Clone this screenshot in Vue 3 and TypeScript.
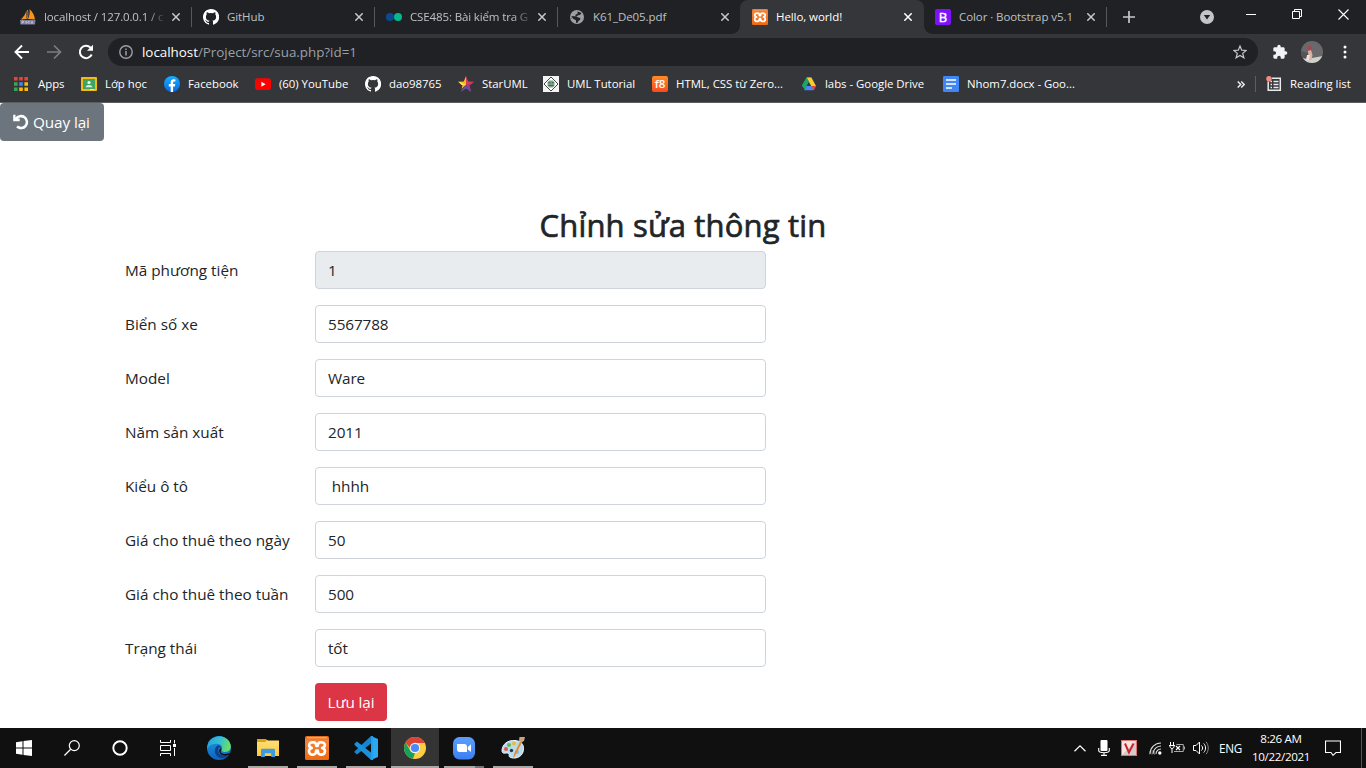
<script setup lang="ts">
import { ref } from 'vue'

interface Tab { title: string; icon: string; active?: boolean; cls?: string }
interface Bookmark { title: string; icon: string }
interface Field { label: string; value: string; readonly?: boolean }

const tabs: Tab[] = [
  { title: 'localhost / 127.0.0.1 / c', icon: 'pma', cls: 'faded' },
  { title: 'GitHub', icon: 'github' },
  { title: 'CSE485: Bài kiểm tra G', icon: 'dots', cls: 'faded' },
  { title: 'K61_De05.pdf', icon: 'globe', cls: 'last-before' },
  { title: 'Hello, world!', icon: 'xampp', active: true },
  { title: 'Color · Bootstrap v5.1', icon: 'bootstrap' },
]

const bookmarks: Bookmark[] = [
  { title: 'Apps', icon: 'apps' },
  { title: 'Lớp học', icon: 'classroom' },
  { title: 'Facebook', icon: 'facebook' },
  { title: '(60) YouTube', icon: 'youtube' },
  { title: 'dao98765', icon: 'github' },
  { title: 'StarUML', icon: 'star' },
  { title: 'UML Tutorial', icon: 'uml' },
  { title: 'HTML, CSS từ Zero...', icon: 'f8' },
  { title: 'labs - Google Drive', icon: 'drive' },
  { title: 'Nhom7.docx - Goo...', icon: 'docs' },
]

const letterIcons: Record<string, string> = { bootstrap: 'B', f8: 'f8' }

const fields = ref<Field[]>([
  { label: 'Mã phương tiện', value: '1', readonly: true },
  { label: 'Biển số xe', value: '5567788' },
  { label: 'Model', value: 'Ware' },
  { label: 'Năm sản xuất', value: '2011' },
  { label: 'Kiểu ô tô', value: ' hhhh' },
  { label: 'Giá cho thuê theo ngày', value: '50' },
  { label: 'Giá cho thuê theo tuần', value: '500' },
  { label: 'Trạng thái', value: 'tốt' },
])

const apps = [
  { icon: 'edge', state: '' },
  { icon: 'explorer', state: 'open' },
  { icon: 'xampp', state: 'open' },
  { icon: 'vscode', state: 'open' },
  { icon: 'chrome', state: 'open current' },
  { icon: 'zoom', state: 'open multi' },
  { icon: 'paint', state: 'open' },
]
</script>

<template>
  <div class="screen">
    <svg class="defs" aria-hidden="true">
      <defs>
        <linearGradient id="gFb" x1="0" y1="0" x2="0" y2="1"><stop offset="0" stop-color="#19afff" /><stop offset="1" stop-color="#0668e8" /></linearGradient>
        <linearGradient id="gXampp" x1="0" y1="0" x2="0" y2="1"><stop offset="0" stop-color="#e06a1c" /><stop offset=".2" stop-color="#f58338" /><stop offset="1" stop-color="#ee6a10" /></linearGradient>
        <linearGradient id="gEdge" x1="0" y1=".2" x2="1" y2=".4"><stop offset="0" stop-color="#2a9fe0" /><stop offset=".55" stop-color="#35c1cf" /><stop offset="1" stop-color="#6be05c" /></linearGradient>
        <linearGradient id="gEdge2" x1="0" y1="0" x2="0" y2="1"><stop offset="0" stop-color="#1b9de2" /><stop offset="1" stop-color="#0c62bf" /></linearGradient>
        <linearGradient id="gFolder" x1="0" y1="0" x2="0" y2="1"><stop offset="0" stop-color="#ffe07a" /><stop offset="1" stop-color="#ffc938" /></linearGradient>
        <linearGradient id="gZoom" x1="0" y1="0" x2="0" y2="1"><stop offset="0" stop-color="#5ba0ff" /><stop offset="1" stop-color="#3b7ff2" /></linearGradient>
        <clipPath id="cAvatar"><circle cx="11" cy="11" r="11" /></clipPath>
        <clipPath id="cStar"><path d="M8 0l2.200 5.400 5.800.4-4.400 3.800L13.200 16 8 12.600 2.800 16l1.600-6.400L0 5.800l5.800-.4z" /></clipPath>
      </defs>
      <symbol id="i-pma" viewBox="0 0 16 16">
        <path d="M6.500 1.500v8.500L.8 10.500C3.500 8 5.500 5 6.500 1.500z" fill="#f6941e" />
        <path d="M9.500 0c3.500 3 5 7 5.500 10.500L8 10C9.500 7 10 3 9.500 0z" fill="#f6941e" />
        <path d="M7.300 1c1 3 .8 6-.4 9" stroke="#9d8e83" fill="none" />
        <path d="M0 11h15.500l-.5 4.500H.5z" fill="#7c7e9c" />
        <path d="M2 15v-3h1.500v1.500H2M6 15v-3l1.500 2L9 12v3M11 15l1-3 1 3" fill="none" stroke="#c9c9df" stroke-width=".7" />
      </symbol>
      <symbol id="i-github" viewBox="0 0 16 16">
        <path fill="#fff" d="M8 0C3.580 0 0 3.580 0 8c0 3.540 2.290 6.530 5.470 7.590.4.070.55-.17.55-.38v-1.330c-2.230.48-2.700-1.070-2.700-1.070-.36-.92-.89-1.170-.89-1.170-.73-.5.050-.49.050-.49.810.060 1.230.83 1.230.83.72 1.230 1.880.87 2.340.67.070-.52.280-.87.510-1.070-1.780-.2-3.650-.89-3.650-3.950 0-.87.310-1.590.83-2.150-.080-.2-.36-1.010.080-2.120 0 0 .67-.21 2.200.82a7.600 7.600 0 0 1 4 0c1.530-1.040 2.200-.82 2.200-.82.440 1.110.160 1.920.080 2.120.51.56.82 1.270.82 2.150 0 3.070-1.870 3.750-3.650 3.950.29.250.54.730.54 1.480v2.200c0 .21.150.46.55.38A8 8 0 0 0 8 0z" />
      </symbol>
      <symbol id="i-dots" viewBox="0 0 16 16"><circle cx="4" cy="8" r="4" fill="#0b4a8f" /><circle cx="12" cy="8" r="4" fill="#05b88f" /></symbol>
      <symbol id="i-globe" viewBox="0 0 16 16">
        <circle cx="8" cy="8" r="7" fill="#9aa0a6" />
        <path d="M8.500 2.500L12.700 4c-1 .3-1 1.800-2.200 2L9 6.200c-.5 1-1.500.5-1.800 1.300L9.500 8.500c.5.500 1.500 0 2 .8L10.800 11 9 12.500 8.500 14 7 13.800v-2.500L4.500 10 2.200 7.500 2 9l1 2-1-3 2-1 2.500.5L6.500 5.500 8.500 5z" fill="#202124" />
      </symbol>
      <symbol id="i-xampp" viewBox="0 0 24 24">
        <rect width="24" height="24" rx="1.500" fill="url(#gXampp)" />
        <path d="M2 1.700h20" stroke="#ffad74" stroke-width="1.200" />
        <path d="M8.300 6.200c-2.600 0-4.200 1.200-4.200 3.100 0 1.500 1.200 2.300 2.800 2.700-1.600.4-2.900 1.400-2.900 3.200 0 2.100 1.600 3.400 4 3.400 2.600 0 3.200-1.700 3.200-4h1.600c0 2.300.6 4 3.200 4 2.400 0 4-1.300 4-3.400 0-1.800-1.300-2.800-2.900-3.200 1.600-.4 2.800-1.200 2.800-2.700 0-1.900-1.600-3.100-4.200-3.100-2.200 0-2.900 1.500-3 3.800h-1.400c-.1-2.300-.8-3.800-3-3.800z" fill="none" stroke="#fff" stroke-width="2.600" stroke-linejoin="round" />
      </symbol>
      <symbol id="i-apps" viewBox="0 0 16 16">
        <path d="M1 1h3.600v3.500H1zM6.200 1h3.600v3.500H6.200zM11.400 1H15v3.500h-3.600z" fill="#ea4335" />
        <path d="M1 6.200h3.600v3.600H1zM1 11.400h3.600V15H1z" fill="#34a853" /><path d="M6.200 6.200h3.600v3.600H6.200z" fill="#4285f4" /><path d="M11.400 6.200H15v3.600h-3.600zM6.200 11.400h3.600V15H6.200zM11.400 11.400H15V15h-3.600z" fill="#fbbc04" />
      </symbol>
      <symbol id="i-classroom" viewBox="0 0 16 16">
        <rect y="1" width="16" height="14" rx="1" fill="#f5ba14" /><rect x="2" y="3" width="12" height="10" fill="#3fa463" />
        <circle cx="8" cy="6.500" r="1.600" fill="#f0f8f3" /><path d="M4.700 11.200c0-3 6.600-3 6.600 0z" fill="#d8efdf" /><path d="M9 13h4v1H9z" fill="#e4e4e4" />
      </symbol>
      <symbol id="i-facebook" viewBox="0 0 16 16"><circle cx="8" cy="8" r="8" fill="url(#gFb)" /><path d="M6.700 16v-5.500H4.800V8.100h1.900V6.500c0-2 1.200-3.200 3-3.200l1.700.15v2h-1c-1 0-1.300.6-1.300 1.200v1.450h2.200l-.4 2.400H9.100V16z" fill="#fff" /></symbol>
      <symbol id="i-youtube" viewBox="0 0 16 16"><rect y="2.300" width="16" height="11.700" rx="2.700" fill="#f00" /><path d="M6.400 5.800v4.900l4.200-2.450z" fill="#fff" /></symbol>
      <symbol id="i-star" viewBox="0 0 16 16">
        <g clip-path="url(#cStar)"><path d="M0 0h8v9L0 16z" fill="#fbb817" /><path d="M8 0h8v8L8 9z" fill="#d93c55" /><path d="M16 6L8 9l6 8z" fill="#a63d7b" /><path d="M8 9l6 7H2z" fill="#6c4cae" /><path d="M0 5l8 4-5 0z" fill="#ffe060" /></g>
      </symbol>
      <symbol id="i-uml" viewBox="0 0 16 16"><path d="M0 0h16v16H0z" fill="#f4f4f4" /><path d="M8 1l7 7-7 7-7-7z" fill="#fff" stroke="#444" /><path d="M4.500 6.500L6 4.500h4l1.500 2v3L10 11.500H6l-1.500-2z" fill="#7da68c" /><path d="M5.500 6.800h2M8.800 6.800h2M5.500 9.500h5" stroke="#2f5a44" stroke-width=".9" /></symbol>
      <symbol id="i-drive" viewBox="0 0 16 16"><path d="M5.600 1.500h4.800l-2.400 4L3.600 13 1 9.500z" fill="#1fa463" /><path d="M5.600 1.500h4.800L15 10h-4.800z" fill="#fcc934" /><path d="M5.600 1.500L8 5.500 3.500 13.500 1 9.500z" fill="#1ea362" /><path d="M5.300 10H15l-2.300 4.300H3.200z" fill="#4688f4" /><path d="M15 10l-2.300 4.300L10.200 10z" fill="#ea4335" /></symbol>
      <symbol id="i-docs" viewBox="0 0 16 16"><rect width="16" height="16" rx="1.300" fill="#4285f4" /><path d="M3 4h10M3 8h10M3 12h6" stroke="#fff" stroke-width="1.600" /></symbol>
      <symbol id="i-edge" viewBox="0 0 24 24">
        <circle cx="12" cy="12" r="12" fill="url(#gEdge2)" />
        <path d="M1 8C4-1 20-3 23.500 8.500c1.200 5-2 7.500-5 7.500-2.500 0-4.500-1-3.700-2.500 1-2 .2-5-3.300-5.500C6.500 7.300 2 9 0 13z" fill="url(#gEdge)" />
        <path d="M10.500 9.500C7 12 7 17 10 20c3 3 8 2.500 11.500-.5C15 21.500 9.500 17 11.500 12.500c.7-1.500 2-1.200 2.800-.5-.5-2-2-3-3.800-2.500z" fill="#123f89" />
        <path d="M13.500 16c1.500 2.500 6 2.500 9 1 1-.5 0 1-1 2-4 1.500-8.500.5-9.500-4 0-2 2.500-4 2.500-2z" fill="#101010" />
      </symbol>
      <symbol id="i-explorer" viewBox="0 0 24 24">
        <path d="M1 3.500h9l2 1h11v15.500H1z" fill="url(#gFolder)" /><path d="M1 3h8.500l1 1.200L9.500 6H1z" fill="#e39d12" />
        <path d="M5 21v-7.500l1-.7h12l1 .7V21h-3.800v-3.700H8.800V21z" fill="#3f9ae0" />
      </symbol>
      <symbol id="i-vscode" viewBox="0 0 24 24">
        <path d="M17 0l7 3v18l-7 3z" fill="#2aa8f2" /><path d="M17 0L1 15l-.8 1 2.700 2.600L17 7.500z" fill="#1684cf" /><path d="M17 24L1 9.300l-.8-1.200 2.700-2.500L17 16.500z" fill="#1b91dc" /><path d="M17 0v24l2 0V0z" fill="#219fe9" />
      </symbol>
      <symbol id="i-chrome" viewBox="0 0 24 24">
        <circle cx="12" cy="12" r="11" fill="#ffcd40" /><path d="M12 7h10l-5.500 8-6 7.900z" fill="#ffcd40" /><path d="M2.500 6.500L8 16l4 1-2 5.800A11 11 0 0 1 2.500 6.500z" fill="#17a05d" /><path d="M12 12H7L2.500 6.500C6.500-.7 17.500-.9 21.800 7H12z" fill="#db4437" />
        <circle cx="12" cy="12" r="5.200" fill="#f1f1f1" /><circle cx="12" cy="12" r="4.100" fill="#4c8bf5" />
      </symbol>
      <symbol id="i-zoom" viewBox="0 0 24 24"><rect x="1" y="1" width="22" height="22.500" rx="6.500" fill="url(#gZoom)" /><path d="M5 8h7.500c1.500 0 2.500 1 2.500 2.500V16H7.500C6 16 5 15 5 13.500zM15.800 11L19 8.300V16l-3.200-2.500z" fill="#fff" /></symbol>
      <symbol id="i-paint" viewBox="0 0 24 24">
        <path d="M1 15C1 8 7 4 14 4.500c6 .4 9 4 8.500 9C22 20 16 23.500 9.500 21.500c-2.500-.8-.5-3-2-4C5.500 16 1.500 19 1 15z" fill="#b9dced" stroke="#e9f7ff" />
        <circle cx="5" cy="13" r="2" fill="#df574f" /><circle cx="8" cy="9" r="2" fill="#66b857" /><circle cx="13" cy="7.500" r="2" fill="#efb83e" /><circle cx="10.500" cy="14.500" r="1.700" fill="#26363f" /><circle cx="16" cy="16" r="2" fill="#8bb5dd" />
        <path d="M12 23l1-5 7-14.500 2 1L14.500 19z" fill="#e78c36" /><path d="M18.500 1l5.500 0-1 4-3 1.500-2-1.500z" fill="#c9a47e" />
      </symbol>
    </svg>

    <header class="browser">
      <div class="tabstrip">
        <div v-for="t in tabs" :key="t.title" class="tab" :class="[t.cls, { active: t.active }]">
          <span v-if="letterIcons[t.icon]" class="icon16 letter" :class="t.icon">{{ letterIcons[t.icon] }}</span>
          <svg v-else class="icon16"><use :href="'#i-' + t.icon" /></svg>
          <span class="tab-title">{{ t.title }}</span>
          <svg class="close" viewBox="0 0 8 8"><path d="M.3.3l7.400 7.400M7.700.3L.3 7.700" /></svg>
        </div>
        <svg class="newtab" viewBox="0 0 12 12"><path d="M6 0v12M0 6h12" stroke="#c6c8cb" stroke-width="1.700" /></svg>
        <div class="window-controls">
          <svg width="14" height="14" viewBox="0 0 14 14" class="search-tabs"><circle cx="7" cy="7" r="7" fill="#c3c5c8" /><path d="M3.800 5h6.400L7 9.500z" fill="#202124" /></svg>
          <svg width="10" height="10" viewBox="0 0 10 10"><path d="M0 5.500h10" stroke="#fff" /></svg>
          <svg width="10" height="10" viewBox="0 0 10 10"><path d="M.5 2.500h7v7h-7zM2.500 2.500v-2h7v7h-2" fill="none" stroke="#fff" /></svg>
          <svg width="11" height="11" viewBox="0 0 11 11"><path d="M.5.5l10 10M10.500.5l-10 10" stroke="#fff" stroke-width="1.100" /></svg>
        </div>
      </div>

      <div class="toolbar">
        <svg class="nav" viewBox="0 0 16 16"><path d="M15 8H2M8 1.500L1.500 8 8 14.500" fill="none" stroke="#fff" stroke-width="1.900" /></svg>
        <svg class="nav" viewBox="0 0 16 16"><path d="M1 8h13M8 1.500L14.500 8 8 14.500" fill="none" stroke="#7c7d80" stroke-width="1.700" /></svg>
        <svg class="nav" viewBox="0 0 16 16"><path d="M13.700 10.500A6.200 6.200 0 1 1 12.500 3.600L14 5" fill="none" stroke="#fff" stroke-width="2" /><path d="M15 .8v6H9z" fill="#fff" /></svg>
        <div class="omnibox">
          <svg width="14" height="14" viewBox="0 0 14 14"><circle cx="7" cy="7" r="6.200" fill="none" stroke="#9aa0a6" stroke-width="1.400" /><path d="M7 6v4.500M7 3.400v1.500" stroke="#9aa0a6" stroke-width="1.500" /></svg>
          <span class="url"><b>localhost</b>/Project/src/sua.php?id=1</span>
          <svg class="fav" width="14" height="14" viewBox="0 0 14 14"><path d="M7 1l1.700 4.200 4.500.3-3.500 2.900 1.200 4.400L7 10.400l-3.900 2.400 1.200-4.400L.8 5.500l4.500-.3z" fill="none" stroke="#c6c8cb" stroke-width="1.200" /></svg>
        </div>
        <svg class="puzzle" viewBox="0 0 24 24"><path d="M20.500 11H19V7c0-1.100-.9-2-2-2h-4V3.500a2.500 2.500 0 0 0-5 0V5H4c-1.100 0-2 .9-2 2v3.800h1.500a2.700 2.700 0 0 1 0 5.400H2V20c0 1.100.9 2 2 2h3.800v-1.500a2.700 2.700 0 0 1 5.400 0V22H17c1.100 0 2-.9 2-2v-4h1.500a2.500 2.500 0 0 0 0-5z" fill="#f1f3f4" /></svg>
        <svg class="avatar" viewBox="0 0 22 22"><g clip-path="url(#cAvatar)"><path d="M0 0h22v22H0z" fill="#6b686b" /><path d="M0 17l11 0 11-2v7H0z" fill="#cfcfcc" /><path d="M0 10l7 2v6l-7-1z" fill="#555356" /><path d="M6.500 6L8.500 4.500 11 6l-.5 4h-3z" fill="#a64650" /><path d="M7 10l3-1 1.500 5-1 5H8z" fill="#d9b1a6" /><path d="M6 14l3 0-1 5H5z" fill="#efe3dc" /></g></svg>
        <svg class="kebab" viewBox="0 0 4 14"><circle cx="2" cy="2" r="1.500" /><circle cx="2" cy="7" r="1.500" /><circle cx="2" cy="12" r="1.500" /></svg>
      </div>

      <nav class="bookmarks">
        <a v-for="b in bookmarks" :key="b.title">
          <span v-if="letterIcons[b.icon]" class="icon16 letter" :class="b.icon">{{ letterIcons[b.icon] }}</span>
          <svg v-else class="icon16"><use :href="'#i-' + b.icon" /></svg>
          <span>{{ b.title }}</span>
        </a>
        <svg class="more" viewBox="0 0 8 7"><path d="M.7.5l3 3-3 3M4.200.5l3 3-3 3" fill="none" stroke="#e8eaed" stroke-width="1.500" /></svg>
        <a class="reading">
          <svg class="icon16" viewBox="0 0 16 16"><path d="M2.200 2.200h12.100v12.100H2.200z" fill="none" stroke="#e8eaed" stroke-width="1.500" /><path d="M4.500 5.500H6M7.500 5.500H12.500M4.500 8.500H6M7.500 8.500H12.500M4.500 11.500H6M7.500 11.500H12.500" stroke="#e8eaed" stroke-width="1.300" /><circle cx="2.500" cy="2" r="3.600" fill="#35363a" /><circle cx="3" cy="2.800" r="2.800" fill="#f28b82" /></svg>
          <span>Reading list</span>
        </a>
      </nav>
    </header>

    <main class="page">
      <button class="btn back" type="button">
        <svg width="16" height="16" viewBox="0 0 16 16"><path d="M3 4.700A6 6 0 1 1 4 12.600" fill="none" stroke="#fff" stroke-width="2.600" /><path d="M.2.700v6.500h6.500V4.600L3.800 4.500 2.500 3.500V.700z" fill="#fff" /></svg>
        <span>Quay lại</span>
      </button>
      <form class="container" @submit.prevent>
        <h2>Chỉnh sửa thông tin</h2>
        <div v-for="f in fields" :key="f.label" class="row">
          <label>{{ f.label }}</label>
          <input v-model="f.value" type="text" :readonly="f.readonly">
        </div>
        <div class="row"><span></span><button class="btn save" type="submit">Lưu lại</button></div>
      </form>
    </main>

    <footer class="taskbar">
      <div class="sys"><svg width="16" height="16" viewBox="0 0 16 16"><path d="M0 2.200L6.500 1.300V7.500H0zM7.500 1.100L16 0v7.500H7.500zM0 8.500h6.500v6.200L0 13.800zM7.500 8.500H16V16l-8.500-1.100z" fill="#fff" /></svg></div>
      <div class="sys"><svg width="16" height="16" viewBox="0 0 16 16"><circle cx="10.300" cy="5.600" r="5" fill="none" stroke="#fff" stroke-width="1.200" /><path d="M6.700 9.200L.4 15.500" stroke="#fff" stroke-width="1.300" /></svg></div>
      <div class="sys"><svg width="16" height="16" viewBox="0 0 16 16"><circle cx="8" cy="8" r="6.700" fill="none" stroke="#fff" stroke-width="1.900" /></svg></div>
      <div class="sys"><svg width="16" height="16" viewBox="0 0 16 16"><path d="M.5 0v2.500h10V0M.5 16v-2.500h10V16M.5 5.500h10v5H.5zM14.500 0v3.500M14.500 8v8" fill="none" stroke="#fff" /><path d="M13 4h3v3h-3z" fill="#fff" /></svg></div>
      <div class="apps">
        <div v-for="a in apps" :key="a.icon" class="app" :class="a.state"><svg width="24" height="24"><use :href="'#i-' + a.icon" /></svg></div>
      </div>
      <div class="tray">
        <svg width="12" height="7" viewBox="0 0 12 7"><path d="M.5 6.300L6 .9l5.500 5.400" fill="none" stroke="#fff" stroke-width="1.200" /></svg>
        <svg width="12" height="16" viewBox="0 0 12 16"><rect x="2.500" width="7" height="11" rx="1" fill="#fff" /><path d="M.7 8v2.500c0 3 10.600 3 10.600 0V8M6 13v2.500M3 15.400h6" fill="none" stroke="#fff" stroke-width="1.100" /></svg>
        <svg width="16" height="16" viewBox="0 0 16 16"><path d="M0 0h16v16H0z" fill="#e07070" /><path d="M1 1h14v14H1z" fill="#f7e3e3" /><path d="M1 15L15 1v14z" fill="#d5c9ca" /><path d="M4 3.500l3.900 9 4.600-9" fill="none" stroke="#c9252b" stroke-width="2" /></svg>
        <svg width="13" height="13" viewBox="0 0 13 13"><path d="M1 12A11 11 0 0 1 12 1M4 12a8 8 0 0 1 8-8M7 12a5 5 0 0 1 5-5" fill="none" stroke="#ddd" stroke-width="1.100" /><path d="M.5 9.500V12.500M3 8v5M5.500 9v4" stroke="#888" stroke-width=".6" /><circle cx="10.800" cy="11" r="1.700" fill="#fff" /></svg>
        <svg width="16" height="12" viewBox="0 0 16 12"><path d="M1.500 0v3M4.500 0v3M0 3.500h6M.8 3.500c0 4 4.400 4 4.400 0M3 6v5" fill="none" stroke="#fff" /><path d="M7.500 2.500h6.800v7H5M15.500 4.500v3" fill="none" stroke="#aaa" /><path d="M7 4l4 4M11 4l-4 4" stroke="#fff" stroke-width="1.100" /></svg>
        <svg width="16" height="14" viewBox="0 0 16 14"><path d="M.5 4.500H3L6.500 1v12L3 9.500H.5z" fill="none" stroke="#fff" /><path d="M8.500 4.500c1.500 1.500 1.500 3.500 0 5M10.700 2.500c2.500 2.500 2.500 6.500 0 9" fill="none" stroke="#fff" /><path d="M13 .8c3 3.500 3 9 0 12.400" fill="none" stroke="#888" /></svg>
        <span class="lang">ENG</span>
        <div class="clock"><span>8:26 AM</span><span>10/22/2021</span></div>
        <svg class="notice" width="16" height="16" viewBox="0 0 16 16"><path d="M.5 1h15v11.500H11L8 15.300l-2-2.800H.5z" fill="none" stroke="#fff" stroke-width="1.100" /></svg>
      </div>
    </footer>
  </div>
</template>

<style>
html, body { overflow: hidden; }
body { margin: 0; }
</style>

<style scoped>
.screen { width: 1366px; height: 768px; display: flex; flex-direction: column; overflow: hidden; background: #fff; font-family: "Open Sans", "Noto Sans", sans-serif; color: #212529; }
.screen * { box-sizing: border-box; }
.screen svg { display: block; flex: none; }
.screen .defs { position: absolute; width: 0; height: 0; }
.icon16 { width: 16px; height: 16px; flex: none; }
.letter { display: flex; align-items: center; justify-content: center; border-radius: 2px; color: #fff; font-weight: 600; line-height: 16px; letter-spacing: 0; }
.bootstrap { background: #7d12fb; font-size: 13px; -webkit-text-stroke: 0.4px #fff; font-weight: 400; }
.f8 { background: linear-gradient(#ff8a26, #f94b1e); font-size: 11.5px; }

.browser { height: 103px; flex: none; background: #35363a; border-bottom: 1px solid #5c5d60; color: #fff; }
.tabstrip { height: 34px; background: #202124; display: flex; padding-left: 8px; font-size: 11.5px; letter-spacing: -0.08px; }
.tab { width: 183px; height: 34px; display: flex; align-items: center; padding: 0 11px 0 12px; color: #bdc1c6; position: relative; }
.tab::after { content: ""; position: absolute; right: -1px; top: 7px; width: 1px; height: 20px; background: #55575b; }
.tab.active { background: #35363a; color: #fff; border-radius: 8px 8px 0 0; width: 184px; padding-right: 12px; }
.tab.active::after { content: none; }
.tab.last-before::after { top: auto; bottom: 0; right: 0; width: 8px; height: 8px; background: radial-gradient(circle at 0 0, transparent 7.5px, #35363a 8px); }
.tab.active + .tab { width: 182px; padding-left: 11px; }
.tab.active + .tab::before { content: ""; position: absolute; left: 0; bottom: 0; width: 8px; height: 8px; background: radial-gradient(circle at 100% 0, transparent 7.5px, #35363a 8px); }
.tab-title { flex: 1; min-width: 0; margin: 0 8px; white-space: nowrap; line-height: 18px; }
.faded .tab-title { letter-spacing: -0.13px; mask-image: linear-gradient(to right, #000 86%, transparent 102%); }
.close { width: 8px; height: 8px; fill: none; stroke: #c6c8cb; stroke-width: 1.5; }
.active .close { stroke: #fff; }
.newtab { width: 12px; height: 12px; margin: 11px 0 0 17px; }
.window-controls { margin-left: auto; display: flex; align-items: flex-start; gap: 36px; padding: 9px 17px 0 0; }
.window-controls .search-tabs { margin: 1px -4px 0 0; }

.toolbar { height: 36px; display: flex; align-items: center; padding: 0 18px 0 14px; }
.nav { width: 16px; height: 16px; margin-right: 16px; }
.omnibox { width: 1150px; height: 28px; margin-left: -2px; padding: 0 11px; background: #202124; border-radius: 14px; display: flex; align-items: center; }
.url { margin-left: 9px; font-size: 13.4px; letter-spacing: -0.02px; color: #9aa0a6; line-height: 20px; }
.url b { font-weight: 400; color: #fff; }
.fav { margin-left: auto; }
.puzzle { width: 16px; height: 16px; margin-left: 14px; }
.avatar { width: 22px; height: 22px; margin-left: 13px; }
.kebab { width: 4px; height: 14px; margin-left: 20px; fill: #fff; }

.bookmarks { height: 28px; padding-left: 13px; display: grid; grid-template-columns: 68px 83px 91px 110px 93px 85px 109px 149px 142px 281px 30px 1fr; align-items: center; font-size: 11.4px; letter-spacing: -0.02px; line-height: 16px; white-space: nowrap; }
.bookmarks a { display: flex; align-items: center; gap: 8px; }
.bookmarks a:first-child { gap: 9px; }
.more { width: 8px; height: 7px; margin-left: 13px; }
.reading { border-left: 1px solid #5c5d60; padding-left: 10px; height: 16px; margin-left: 1px; }

.page { flex: 1; min-height: 0; overflow: hidden; font-size: 15.3px; letter-spacing: 0; }
.btn { height: 38px; border: 0; border-radius: 4px; color: #fff; font: inherit; letter-spacing: -0.1px; line-height: 24px; padding: 0 12px; display: flex; align-items: center; white-space: nowrap; }
.back { background: #6c757d; width: 104px; gap: 4px; padding-left: 13px; }
.save { background: #dc3545; width: 72px; justify-content: center; padding: 0; }
.container { width: 1140px; margin: 66px auto 0; padding: 0 12px; }
h2 { margin: 0 0 6px; height: 38px; line-height: 37px; font-size: 31px; font-weight: 400; -webkit-text-stroke: 0.7px #212529; letter-spacing: 0.18px; text-align: center; }
.row { display: grid; grid-template-columns: 190px 451px; margin-bottom: 16px; height: 38px; align-items: center; }
label { line-height: 24px; }
input { width: 451px; height: 38px; border: 1px solid #ced4da; border-radius: 4px; padding: 6px 12px; font: inherit; letter-spacing: -0.12px; color: #212529; background: #fff; outline: none; }
input[readonly] { background: #e9ecef; }

.taskbar { height: 40px; flex: none; display: flex; background: #101010; color: #fff; }
.sys { width: 48px; display: grid; place-items: center; }
.apps { display: flex; gap: 1px; margin-left: 3px; }
.app { width: 48px; height: 40px; display: grid; place-items: center; position: relative; }
.open::after { content: ""; position: absolute; left: 4px; right: 4px; bottom: 0; height: 2px; background: #aaa8a4; }
.current { background: #343434; }
.current::after { left: 0; right: 0; }
.multi::after { background: linear-gradient(to right, #aaa8a4 31px, #747474 31px); }
.tray { margin-left: auto; display: flex; align-items: center; padding-right: 4px; border-right: 1px solid #555; margin-right: 4px; }
.tray svg + svg { margin-left: 12px; }
.tray svg:nth-of-type(3) { margin-left: 11px; }
.tray svg:nth-of-type(5) { margin-left: 7px; }
.tray svg:nth-of-type(6) { margin-left: 8px; }
.lang { font-size: 11.7px; letter-spacing: -0.3px; margin-left: 10px; width: 24px; }
.clock { width: 58px; margin-left: 9px; display: flex; flex-direction: column; align-items: center; font-size: 11.6px; line-height: 18px; letter-spacing: -0.35px; }
.tray .notice { margin: 0 16px 0 15px; }
</style>
